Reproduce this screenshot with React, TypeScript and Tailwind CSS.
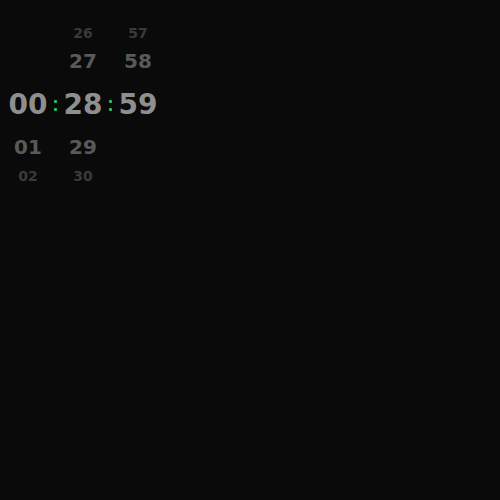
import React from "react";

const font = { fontFamily: '"DejaVu Sans", Verdana, sans-serif' };

function Column({ value, max }: { value: number; max: number }) {
  const offsets = [-2, -1, 0, 1, 2];
  const rowCls: Record<number, string> = {
    [-2]: "h-[20px] text-[14px] text-[#3a3a3a]",
    [-1]: "h-[36px] text-[20px] text-[#595959]",
    [0]: "h-[52px] text-[28px] text-[#8f8f8f]",
    [1]: "h-[31px] text-[20px] text-[#595959]",
    [2]: "h-[28px] text-[14px] text-[#3a3a3a]",
  };
  return (
    <div className="flex w-[48px] flex-col">
      {offsets.map((o) => {
        const v = value + o;
        const show = v >= 0 && v <= max;
        return (
          <div key={o} className={`flex items-center justify-center font-bold leading-none ${rowCls[o]}`}>
            {show ? String(v).padStart(2, "0") : ""}
          </div>
        );
      })}
    </div>
  );
}

function Colon() {
  return (
    <div className="flex w-[7px] flex-col">
      <div className="h-[56px]" />
      <div className="flex h-[52px] flex-col items-center justify-center gap-[5px]">
        <div className="h-[3px] w-[3px] rounded-[1px] bg-[#22c55e]" />
        <div className="h-[3px] w-[3px] rounded-[1px] bg-[#22c55e]" />
      </div>
    </div>
  );
}

export default function App() {
  return (
    <div className="h-[500px] w-[500px] bg-[#0a0a0a]" style={font}>
      <div className="flex pl-[4px] pt-[23px]">
        <Column value={0} max={23} />
        <Colon />
        <Column value={28} max={59} />
        <Colon />
        <Column value={59} max={59} />
      </div>
    </div>
  );
}
